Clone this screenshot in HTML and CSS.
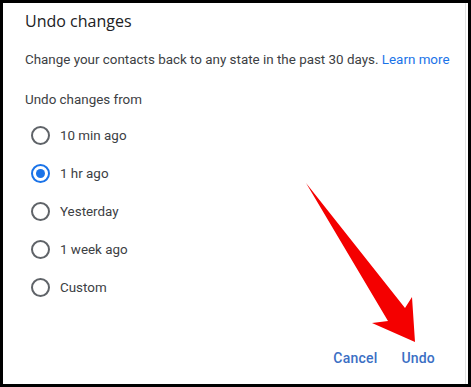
FILE: index.html
```html
<!DOCTYPE html>
<html>
  <head>
    <meta charset="UTF-8">
    <title>Undo changes</title>
    <link rel="stylesheet" href="styles.css">
  </head>
  <body>
    <div class="marco">
      <div class="dialogo">
        <h2 class="titulo">Undo changes</h2>
        <p class="texto">Change your contacts back to any state in the past 30 days. <a href="#" class="enlace">Learn more</a></p>
        <p class="subtitulo">Undo changes from</p>

        <div class="opciones">
          <label class="opcion"><span class="radio"></span>10 min ago</label>
          <label class="opcion"><span class="radio marcado"></span>1 hr ago</label>
          <label class="opcion"><span class="radio"></span>Yesterday</label>
          <label class="opcion"><span class="radio"></span>1 week ago</label>
          <label class="opcion"><span class="radio"></span>Custom</label>
        </div>

        <div class="botones">
          <span class="boton">Cancel</span>
          <span class="boton">Undo</span>
        </div>
      </div>

      <svg class="flecha" width="471" height="387" viewBox="0 0 471 387">
        <polygon points="306,183 405,308 412,297 415,342 372,323 388,321" fill="#f40000"/>
      </svg>
    </div>
  </body>
</html>
```

FILE: styles.css
```css
body {
  margin: 0;
  background: #fff;
}

.marco {
  position: relative;
  width: 471px;
  height: 387px;
  box-sizing: border-box;
  border: 3px solid #000;
  overflow: hidden;
}

.dialogo {
  height: 100%;
  box-sizing: border-box;
  padding: 0 0 0 22px;
  border-right: 1px solid #e4e4e4;
  margin-right: 2px;
  font-family: Roboto, "Liberation Sans", sans-serif;
  color: #3c4043;
  display: flex;
  flex-direction: column;
}

.titulo {
  margin: 8px 0 0 0;
  font-family: "Open Sans", Roboto, sans-serif;
  font-weight: 400;
  font-size: 16px;
  line-height: 20px;
  color: #202124;
}

.texto {
  margin: 20px 0 0 0;
  font-size: 13.4px;
  line-height: 18px;
  color: #3c4043;
}

.enlace {
  color: #1a73e8;
  text-decoration: none;
}

.subtitulo {
  margin: 22px 0 0 0;
  font-size: 13.4px;
  line-height: 18px;
}

.opciones {
  margin-top: 7px;
}

.opcion {
  display: flex;
  align-items: center;
  height: 38px;
  font-size: 13.4px;
  color: #3c4043;
}

.radio {
  width: 15px;
  height: 15px;
  border: 2px solid #5f6368;
  border-radius: 50%;
  margin: 0 10px 0 6px;
  position: relative;
}

.radio.marcado {
  border-color: #1a73e8;
}

.radio.marcado::after {
  content: "";
  position: absolute;
  left: 3px;
  top: 3px;
  width: 9px;
  height: 9px;
  border-radius: 50%;
  background: #1a73e8;
}

.botones {
  margin-top: auto;
  margin-bottom: 18px;
  display: flex;
  justify-content: flex-end;
  gap: 24px;
  padding-right: 30px;
}

.boton {
  font-size: 14px;
  font-weight: 500;
  color: #3b6fc4;
  letter-spacing: 0.2px;
}

.flecha {
  position: absolute;
  left: -3px;
  top: -3px;
}
```
